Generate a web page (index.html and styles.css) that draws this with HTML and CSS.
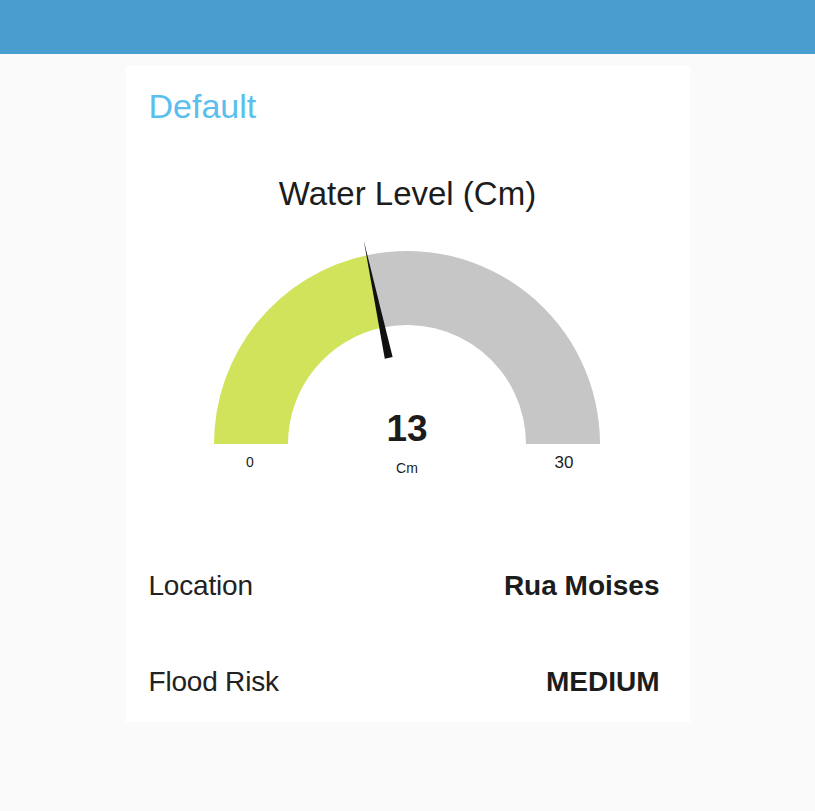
FILE: index.html
```html
<!DOCTYPE html>
<html>
<head>
<meta charset="utf-8">
<link rel="stylesheet" href="styles.css">
</head>
<body>
<header class="topbar"></header>
<main class="page">
  <section class="card">
    <h1 class="card-title">Default</h1>
    <div class="gauge">
      <div class="gauge-title">Water Level (Cm)</div>
      <svg class="gauge-svg" width="564" height="270" viewBox="0 0 564 270">
        <path class="arc-fill" d="M88 230 A193 193 0 0 1 240.87 41.22 L256.26 113.60 A119 119 0 0 0 162 230 Z"/>
        <path class="arc-rest" d="M240.87 41.22 A193 193 0 0 1 474 230 L400 230 A119 119 0 0 0 256.26 113.60 Z"/>
        <polygon class="needle" points="237.75,26.54 266.6,143.1 258.8,144.75"/>
        <text class="g-value" x="281" y="227" text-anchor="middle">13</text>
        <text class="g-unit" x="281" y="259" text-anchor="middle">Cm</text>
        <text class="g-min" x="124" y="253" text-anchor="middle">0</text>
        <text class="g-max" x="438" y="254" text-anchor="middle">30</text>
      </svg>
    </div>
    <div class="rows">
      <div class="row"><span class="label">Location</span><span class="value">Rua Moises</span></div>
      <div class="row"><span class="label">Flood Risk</span><span class="value">MEDIUM</span></div>
    </div>
  </section>
</main>
</body>
</html>
```
FILE: styles.css
```css
html, body {
  margin: 0;
  padding: 0;
}
body {
  background: #fafafa;
  font-family: "Liberation Sans", Arial, sans-serif;
  color: #1f1f1f;
  width: 815px;
  height: 811px;
  overflow: hidden;
}
.topbar {
  height: 54px;
  background: #4a9ecf;
}
.page {
  padding-top: 12px;
}
.card {
  width: 564px;
  height: 656px;
  box-sizing: border-box;
  margin: 0 auto;
  background: #ffffff;
  padding: 20px 30px 0 23px;
}
.card-title {
  margin: 0;
  font-size: 34px;
  line-height: 40px;
  font-weight: normal;
  color: #5bbfee;
}
.gauge {
  margin: 48px -30px 0 -23px;
  display: flex;
  flex-direction: column;
  align-items: center;
}
.gauge-title {
  font-size: 33px;
  line-height: 40px;
  color: #1c1c1c;
}
.gauge-svg {
  display: block;
}
.arc-fill { fill: #d1e35a; }
.arc-rest { fill: #c6c6c6; }
.needle { fill: #111111; }
.gauge-svg text {
  font-family: "Liberation Sans", Arial, sans-serif;
  fill: #1c1c1c;
}
.g-value { font-size: 37px; font-weight: bold; }
.g-unit { font-size: 14px; }
.g-min { font-size: 14px; }
.g-max { font-size: 17px; }
.rows {
  margin-top: 86px;
  display: flex;
  flex-direction: column;
  gap: 64px;
}
.row {
  display: flex;
  justify-content: space-between;
  align-items: baseline;
  font-size: 28px;
  line-height: 32px;
}
.label { color: #222222; letter-spacing: -0.2px; }
.value { font-weight: bold; color: #1c1c1c; }
```
